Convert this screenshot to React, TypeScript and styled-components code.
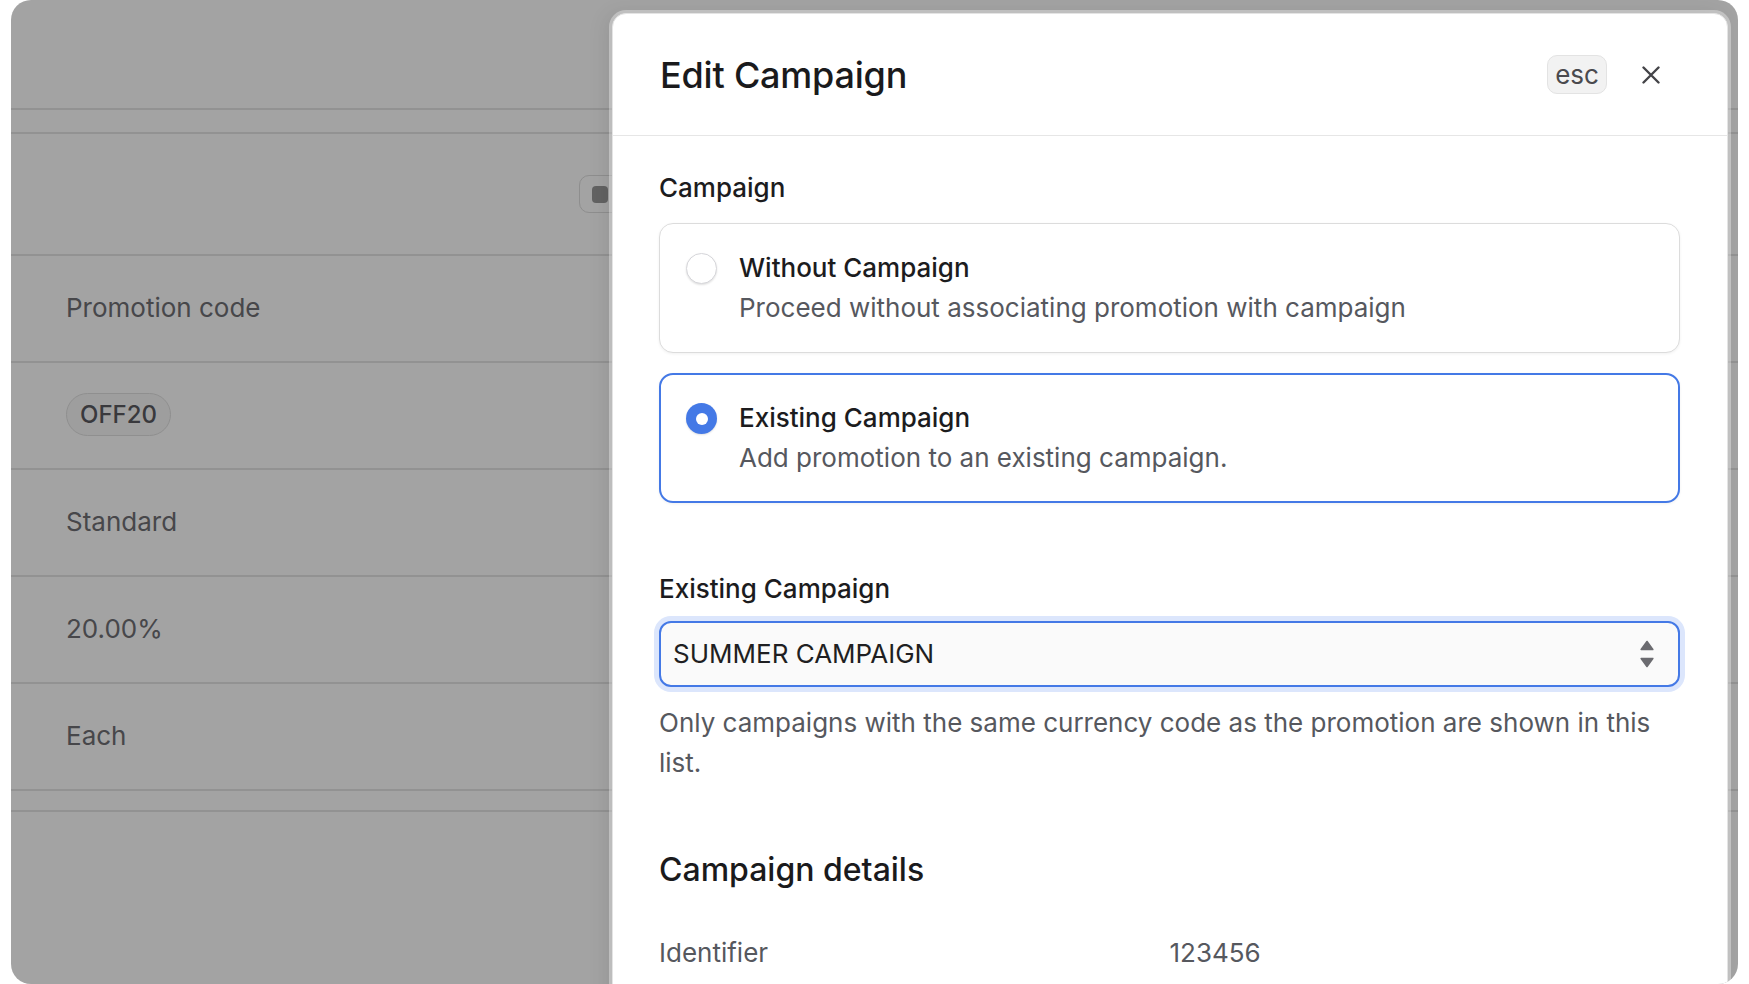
import styled, { createGlobalStyle } from "styled-components";

const GlobalStyle = createGlobalStyle`
  * { box-sizing: border-box; }
  html, body {
    margin: 0;
    padding: 0;
    background: #ffffff;
  }
  body {
    font-family: Inter, "Noto Sans", "Liberation Sans", sans-serif;
    -webkit-font-smoothing: antialiased;
  }
`

const Screen = styled.div`
    width: 1749px;
    height: 984px;
    padding: 0 11px;
    overflow: hidden;
    background: #ffffff;
`

const Page = styled.div`
    position: relative;
    height: 984px;
    border-radius: 20px;
    overflow: hidden;
    background: #ffffff;
`

const PageHeader = styled.div`
    height: 110px;
    border-bottom: 2px solid #e5e5e5;
`

const Band = styled.div<{ $height?: number }>`
    height: ${p => p.$height ?? 24}px;
    border-bottom: 2px solid #e5e5e5;
`

const Toolbar = styled.div`
    display: grid;
    grid-template-columns: 514px auto;
    align-items: center;
    height: 122px;
    padding: 0 54px;
    border-bottom: 2px solid #e5e5e5;
`

const ToolButton = styled.button`
    display: flex;
    align-items: center;
    gap: 10px;
    width: 140px;
    height: 38px;
    padding: 0 12px;
    background: #ffffff;
    border: 1px solid #dedede;
    border-radius: 10px;
    font: inherit;
    font-size: 24px;
    color: #6f6f75;
`

const ToolGlyph = styled.span`
    width: 16px;
    height: 17px;
    border-radius: 4px;
    background: #9a9a9a;
`

const DetailRow = styled.div`
    display: flex;
    align-items: center;
    height: 107px;
    padding: 0 55px 2px;
    border-bottom: 2px solid #e5e5e5;
    font-size: 26px;
    color: #6f6f75;
`

const Pill = styled.span`
    display: inline-flex;
    align-items: center;
    height: 43px;
    padding: 0 13px;
    border: 1px solid #e0e0e0;
    border-radius: 22px;
    background: #f8f8f8;
    font-size: 24px;
    font-weight: 500;
    color: #5a5a60;
`

const Overlay = styled.div`
    position: absolute;
    inset: 0;
    background: rgba(0, 0, 0, 0.36);
`

const Drawer = styled.aside`
    position: absolute;
    top: 13px;
    right: 10px;
    width: 1116px;
    height: 1100px;
    background: #ffffff;
    border: 1px solid #e4e4e4;
    border-radius: 14px;
    box-shadow: 0 0 0 3px rgba(255, 255, 255, 0.35), -6px 0 20px rgba(0, 0, 0, 0.08);
    overflow: hidden;
`

const DrawerHeader = styled.header`
    display: flex;
    align-items: center;
    height: 122px;
    padding: 0 54px 0 47px;
    border-bottom: 1px solid #e6e6e6;
`

const Title = styled.h1`
    flex: 1;
    margin: 0;
    font-size: 36px;
    font-weight: 500;
    color: #1a1a1c;
    letter-spacing: -0.2px;
`

const Kbd = styled.kbd`
    display: inline-flex;
    align-items: center;
    justify-content: center;
    width: 60px;
    height: 39px;
    border: 1px solid #e3e3e3;
    border-radius: 10px;
    background: #f2f2f2;
    font-family: inherit;
    font-size: 26px;
    color: #4a4a4e;
`

const CloseButton = styled.button`
    display: flex;
    align-items: center;
    justify-content: center;
    width: 44px;
    height: 44px;
    margin-left: 22px;
    padding: 0;
    border: none;
    background: none;
    color: #444448;
    cursor: pointer;
`

const Body = styled.div`
    padding: 34px 47px 0 46px;
`

const FieldLabel = styled.div<{ $top?: number }>`
    margin-top: ${p => p.$top ?? 0}px;
    font-size: 26px;
    line-height: 36px;
    font-weight: 500;
    color: #1c1c1e;
`

const Options = styled.div`
    display: flex;
    flex-direction: column;
    gap: 20px;
    margin-top: 17px;
`

const OptionCard = styled.label<{ $checked?: boolean }>`
    display: flex;
    gap: 22px;
    padding: ${p => (p.$checked ? "23px 25px" : "24px 26px")};
    border: ${p => (p.$checked ? "2px solid #4479e6" : "1px solid #dcdcdc")};
    border-radius: 14px;
    background: #ffffff;
    box-shadow: 0 1px 3px rgba(0, 0, 0, 0.06);
    cursor: pointer;
`

const Radio = styled.span<{ $checked?: boolean }>`
    position: relative;
    flex: none;
    width: 31px;
    height: 31px;
    margin-top: 5px;
    border-radius: 50%;
    background: ${p => (p.$checked ? "#4479e6" : "#ffffff")};
    border: ${p => (p.$checked ? "none" : "1px solid #d6d6da")};
    box-shadow: 0 1px 2px rgba(0, 0, 0, 0.12);
    &::after {
        content: "";
        display: ${p => (p.$checked ? "block" : "none")};
        position: absolute;
        top: 50%;
        left: 50%;
        width: 12px;
        height: 12px;
        margin: -6px 0 0 -6px;
        border-radius: 50%;
        background: #ffffff;
    }
`

const OptionText = styled.div`
    display: flex;
    flex-direction: column;
    font-size: 26px;
    line-height: 40px;
`

const OptionTitle = styled.span`
    font-weight: 500;
    color: #1c1c1e;
`

const OptionHint = styled.span`
    color: #56585e;
`

const Select = styled.div`
    display: flex;
    align-items: center;
    height: 66px;
    margin-top: 14px;
    padding: 0 24px 0 12px;
    border: 2px solid #4479e6;
    border-radius: 12px;
    background: #fafafa;
    box-shadow: 0 0 0 5px #dce6fc;
    font-size: 26px;
    line-height: 36px;
    color: #1f1f22;
`

const SelectValue = styled.span`
    flex: 1;
`

const HelpText = styled.p`
    margin: 16px 0 0;
    font-size: 26px;
    line-height: 40px;
    color: #56585e;
`

const SectionTitle = styled.h2`
    margin: 67px 0 0;
    font-size: 32px;
    line-height: 40px;
    font-weight: 500;
    color: #1a1a1c;
`

const Details = styled.dl`
    display: grid;
    grid-template-columns: 1fr 1fr;
    margin: 43px 0 0;
    font-size: 26px;
    line-height: 40px;
    color: #56585e;
    dt, dd { margin: 0; }
`

const rows = ["Promotion code", "OFF20", "Standard", "20.00%", "Each"]

function CloseIcon() {
  return (
    <svg width="18" height="18" viewBox="0 0 18 18" fill="none" stroke="currentColor" strokeWidth="2.4" strokeLinecap="round">
      <path d="M1.5 1.5 L16.5 16.5 M16.5 1.5 L1.5 16.5" />
    </svg>
  )
}

function SortIcon() {
  return (
    <svg width="14" height="28" viewBox="0 0 14 28" fill="#6b6b70" stroke="#6b6b70" strokeWidth="1.6" strokeLinejoin="round">
      <path d="M7 1.5 L12.8 9.5 H1.2 Z" />
      <path d="M7 26.5 L12.8 18.5 H1.2 Z" />
    </svg>
  )
}

function App() {
  return (
    <Screen>
      <GlobalStyle />
      <Page>
        <PageHeader />
        <Band />
        <Toolbar>
          <span />
          <ToolButton>
            <ToolGlyph />
            Edit
          </ToolButton>
        </Toolbar>
        {rows.map(r => (
          <DetailRow key={r}>
            {r === "OFF20" ? <Pill>{r}</Pill> : r}
          </DetailRow>
        ))}
        <Band $height={21} />
        <Overlay />
        <Drawer>
          <DrawerHeader>
            <Title>Edit Campaign</Title>
            <Kbd>esc</Kbd>
            <CloseButton aria-label="Close">
              <CloseIcon />
            </CloseButton>
          </DrawerHeader>
          <Body>
            <FieldLabel>Campaign</FieldLabel>
            <Options>
              <OptionCard>
                <Radio />
                <OptionText>
                  <OptionTitle>Without Campaign</OptionTitle>
                  <OptionHint>Proceed without associating promotion with campaign</OptionHint>
                </OptionText>
              </OptionCard>
              <OptionCard $checked>
                <Radio $checked />
                <OptionText>
                  <OptionTitle>Existing Campaign</OptionTitle>
                  <OptionHint>Add promotion to an existing campaign.</OptionHint>
                </OptionText>
              </OptionCard>
            </Options>
            <FieldLabel $top={68}>Existing Campaign</FieldLabel>
            <Select>
              <SelectValue>SUMMER CAMPAIGN</SelectValue>
              <SortIcon />
            </Select>
            <HelpText>
              Only campaigns with the same currency code as the promotion are shown in this list.
            </HelpText>
            <SectionTitle>Campaign details</SectionTitle>
            <Details>
              <dt>Identifier</dt>
              <dd>123456</dd>
            </Details>
          </Body>
        </Drawer>
      </Page>
    </Screen>
  )
}

export default App
